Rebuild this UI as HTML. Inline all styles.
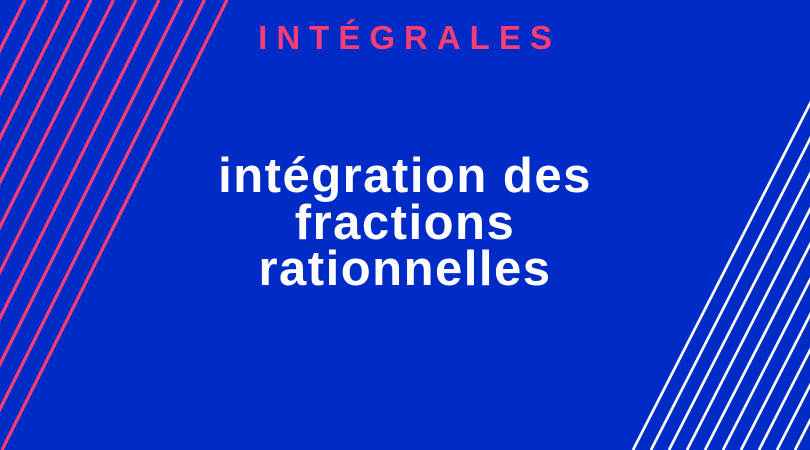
<!DOCTYPE html>
<html><head><meta charset="utf-8"><style>
html,body{margin:0;padding:0}
body{width:810px;height:450px;background:#002bc6;position:relative;overflow:hidden;font-family:"Liberation Sans",sans-serif}
svg{position:absolute;left:0;top:0}
.t{position:absolute;left:0;width:810px;text-align:center;font-weight:bold}
#h{top:18px;color:#f63d75;font-size:33px;letter-spacing:9px;text-indent:9px;line-height:40px}
.m{color:#fff;font-size:49px;line-height:47px;letter-spacing:1.5px;white-space:nowrap}
</style></head><body>
<svg width="810" height="450">
<g stroke="#f63d75" stroke-width="3.3">
<line x1="227" y1="0" x2="2" y2="450"/>
<line x1="204.5" y1="0" x2="-20.5" y2="450"/>
<line x1="182" y1="0" x2="-43" y2="450"/>
<line x1="159" y1="0" x2="-66" y2="450"/>
<line x1="136" y1="0" x2="-89" y2="450"/>
<line x1="113.5" y1="0" x2="-111.5" y2="450"/>
<line x1="91" y1="0" x2="-134" y2="450"/>
<line x1="69" y1="0" x2="-156" y2="450"/>
<line x1="47" y1="0" x2="-178" y2="450"/>
<line x1="25" y1="0" x2="-200" y2="450"/>
</g>
<g stroke="#fff" stroke-width="2.7">
<line x1="633" y1="450" x2="863" y2="0"/>
<line x1="651" y1="450" x2="881" y2="0"/>
<line x1="669" y1="450" x2="899" y2="0"/>
<line x1="687" y1="450" x2="917" y2="0"/>
<line x1="705" y1="450" x2="935" y2="0"/>
<line x1="723" y1="450" x2="953" y2="0"/>
<line x1="741" y1="450" x2="971" y2="0"/>
<line x1="759" y1="450" x2="989" y2="0"/>
<line x1="777" y1="450" x2="1007" y2="0"/>
<line x1="795" y1="450" x2="1025" y2="0"/>
</g>
</svg>
<div class="t" id="h">INTÉGRALES</div>
<div class="t m" style="top:153px">intégration des</div>
<div class="t m" style="top:200px">fractions</div>
<div class="t m" style="top:246px">rationnelles</div>
</body></html>
